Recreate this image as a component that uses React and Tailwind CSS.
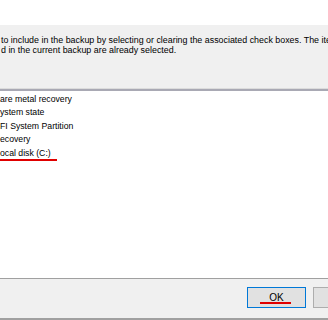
export default function App() {
  const items = [
    "are metal recovery",
    "ystem state",
    "FI System Partition",
    "ecovery",
    "ocal disk (C:)",
  ];
  return (
    <div className="w-[328px] h-[320px] overflow-hidden bg-white text-black text-[8.7px] leading-[10px] font-['Liberation_Sans',sans-serif] flex flex-col">
      <div className="h-[25px] bg-white shrink-0" />
      <div className="h-[63px] bg-[#f0f0f0] shrink-0 pt-[10px] pl-[1px] whitespace-nowrap text-[8.9px]">
        <div className="h-[10px]">to include in the backup by selecting or clearing the associated check boxes. The items</div>
        <div className="h-[10px]">d in the current backup are already selected.</div>
      </div>
      <div className="h-[1px] bg-[#dcdcdc] shrink-0" />
      <div className="h-[2px] bg-[#a9a9b4] shrink-0" />
      <div className="h-[187px] bg-white shrink-0 pt-[1px] whitespace-nowrap">
        {items.map((t, i) => (
          <div key={i} className="h-[13.5px] flex items-center">
            {i === 4 ? (
              <span className="relative inline-block">
                {t}
                <span className="absolute left-0 top-[11px] w-[57px] h-[2px] bg-[#e00000]" />
              </span>
            ) : (
              t
            )}
          </div>
        ))}
      </div>
      <div className="h-[1px] bg-[#a0a0a0] shrink-0" />
      <div className="flex-1 bg-[#f0f0f0] flex items-start pt-[8px] gap-[7px] pl-[247px]">
        <div className="w-[59px] h-[21px] shrink-0 border border-[#0078d7] bg-[#e1e1e1] flex items-center justify-center relative text-[10px]">
          <span>OK</span>
          <span className="absolute left-[12px] top-[14px] w-[31px] h-[2px] bg-[#e00000]" />
        </div>
        <div className="w-[59px] h-[21px] shrink-0 border border-[#adadad] bg-[#e1e1e1]" />
      </div>
      <div className="h-[2px] bg-[#a0a0a0] shrink-0" />
    </div>
  );
}
